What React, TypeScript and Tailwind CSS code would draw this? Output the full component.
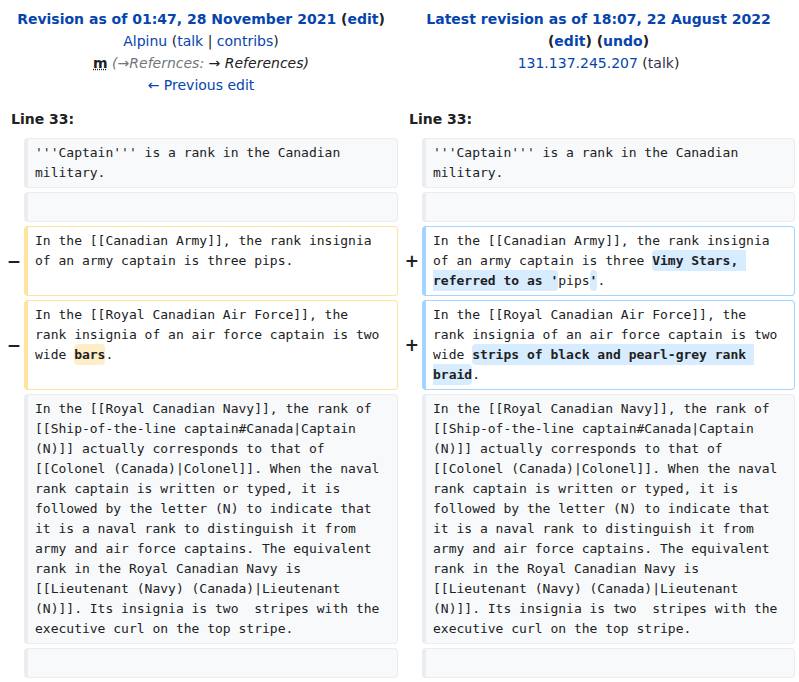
const mono = "font-['DejaVu_Sans_Mono',monospace]"
const link = 'text-[#0645ad]'

function Marker({ sign }: { sign?: string }) {
  return (
    <div className="flex items-center justify-end -mr-[1px] text-[17px] font-bold text-[#202122] leading-none">
      {sign}
    </div>
  )
}

function Cell({ kind, children }: { kind: 'ctx' | 'del' | 'add'; children?: React.ReactNode }) {
  const tone =
    kind === 'ctx'
      ? 'bg-[#f8f9fa] border-[#eaecf0]'
      : kind === 'del'
        ? 'bg-white border-[#ffe49c]'
        : 'bg-white border-[#a3d3ff]'
  return (
    <div
      className={`${tone} ${mono} border border-l-4 rounded-[4px] pl-[7px] pr-[12px] py-[4px] text-[13px] leading-[20px] text-[#202122] whitespace-pre-wrap break-words`}
    >
      {children ?? '\u00a0'}
    </div>
  )
}

function Del({ children }: { children: React.ReactNode }) {
  return <span className="bg-[#feeec8] font-bold rounded-[4px] py-[3px]">{children}</span>
}

function Ins({ children }: { children: React.ReactNode }) {
  return <span className="bg-[#d8ecff] font-bold rounded-[4px] py-[3px]">{children}</span>
}

const navy =
  'In the [[Royal Canadian Navy]], the rank of [[Ship-of-the-line captain#Canada|Captain (N)]] actually corresponds to that of [[Colonel (Canada)|Colonel]]. When the naval rank captain is written or typed, it is followed by the letter (N) to indicate that it is a naval rank to distinguish it from army and air force captains. The equivalent rank in the Royal Canadian Navy is [[Lieutenant (Navy) (Canada)|Lieutenant (N)]]. Its insignia is two  stripes with the executive curl on the top stripe.'

export default function App() {
  return (
    <div className="bg-white min-h-screen font-['DejaVu_Sans',sans-serif] text-[#202122]">
      <div className="grid grid-cols-[16px_374px_16px_373px] gap-1 p-1">
        {/* revision headers */}
        <div className="col-span-2 text-center text-[14px] leading-[22px] pt-1 pb-1">
          <div className="font-bold">
            <a className={link}>Revision as of 01:47, 28 November 2021</a> (<a className={link}>edit</a>)
          </div>
          <div>
            <a className={link}>Alpinu</a> (<a className={link}>talk</a> | <a className={link}>contribs</a>)
          </div>
          <div>
            <abbr className="font-bold underline decoration-dotted">m</abbr>{' '}
            <span className="italic">
              <span className="text-[#72777d]">(→Refernces: </span>→ References)
            </span>
          </div>
          <div>
            <a className={link}>← Previous edit</a>
          </div>
        </div>
        <div className="col-span-2 text-center text-[14px] leading-[22px] pt-1 pb-1">
          <div className="font-bold">
            <a className={link}>Latest revision as of 18:07, 22 August 2022</a>
          </div>
          <div className="font-bold">
            (<a className={link}>edit</a>) (<a className={link}>undo</a>)
          </div>
          <div>
            <a className={link}>131.137.245.207</a> (<a className="text-[#33334d]">talk</a>)
          </div>
        </div>

        {/* line numbers */}
        <div className="col-span-2 pl-[7px] py-1 text-[14px] leading-[22px] font-bold">Line 33:</div>
        <div className="col-span-2 pl-[7px] py-1 text-[14px] leading-[22px] font-bold">Line 33:</div>

        <Marker />
        <Cell kind="ctx">'''Captain''' is a rank in the Canadian military.</Cell>
        <Marker />
        <Cell kind="ctx">'''Captain''' is a rank in the Canadian military.</Cell>

        <Marker />
        <Cell kind="ctx" />
        <Marker />
        <Cell kind="ctx" />

        <Marker sign="−" />
        <Cell kind="del">In the [[Canadian Army]], the rank insignia of an army captain is three pips.</Cell>
        <Marker sign="+" />
        <Cell kind="add">
          In the [[Canadian Army]], the rank insignia of an army captain is three{' '}
          <Ins>Vimy Stars, referred to as '</Ins>pips<Ins>'</Ins>.
        </Cell>

        <Marker sign="−" />
        <Cell kind="del">
          In the [[Royal Canadian Air Force]], the rank insignia of an air force captain is two wide <Del>bars</Del>.
        </Cell>
        <Marker sign="+" />
        <Cell kind="add">
          In the [[Royal Canadian Air Force]], the rank insignia of an air force captain is two wide{' '}
          <Ins>strips of black and pearl-grey rank braid</Ins>.
        </Cell>

        <Marker />
        <Cell kind="ctx">{navy}</Cell>
        <Marker />
        <Cell kind="ctx">{navy}</Cell>

        <Marker />
        <Cell kind="ctx" />
        <Marker />
        <Cell kind="ctx" />
      </div>
    </div>
  )
}
